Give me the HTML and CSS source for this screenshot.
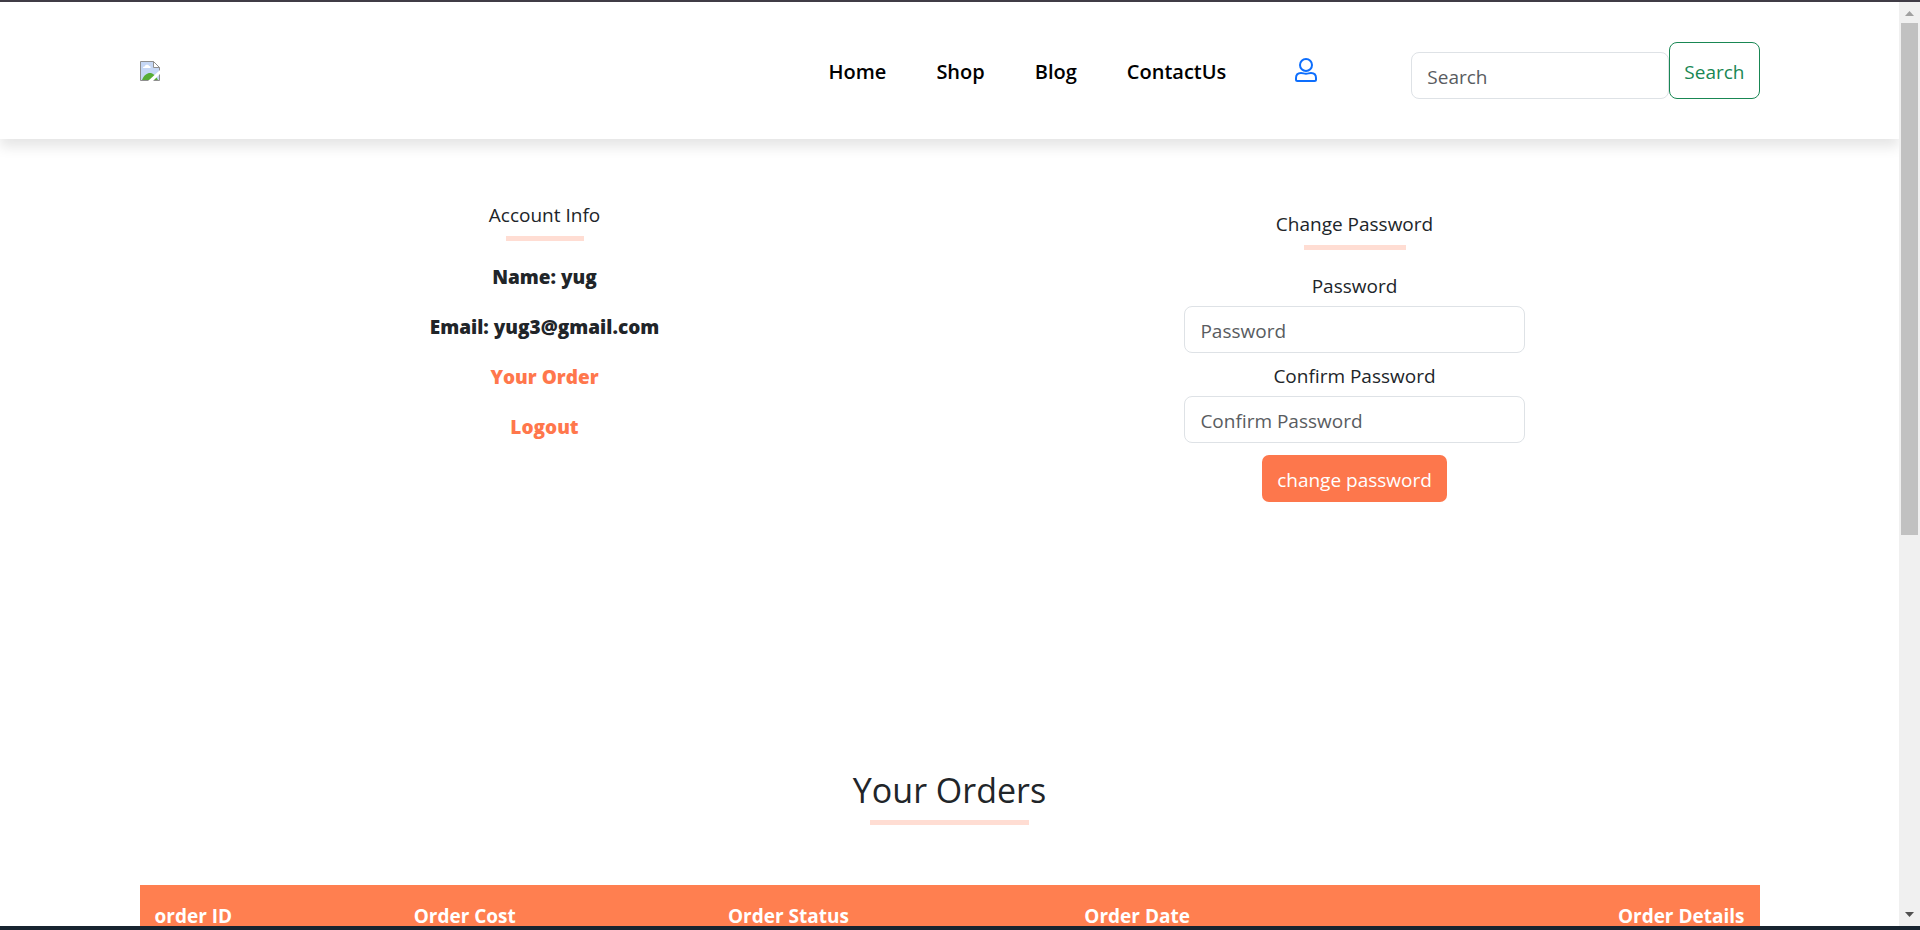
FILE: index.html
```html
<!DOCTYPE html>
<html lang="en">
  <head>
    <meta charset="UTF-8" />
    <meta name="viewport" content="width=device-width, initial-scale=1.0" />
    <title>Account</title>
    <link rel="stylesheet" href="styles.css">
  </head>
  <body>
    <div class="page">
      <nav class="navbar">
        <div class="container nav-inner">
          <a class="logo" href="#" aria-label="Logo">
            <svg width="20" height="20" viewBox="0 0 20 20">
              <path d="M.5.5h13l6 6v13H.5z" fill="#c5d7f5" stroke="#8f8f8f"/>
              <path d="M13.5.5v6h6z" fill="#fff" stroke="#8f8f8f"/>
              <path d="M3 7c0-2 2-1 2-2 1-2 4-1 4 0 2 0 2 2 1 2z" fill="#fff"/>
              <path d="M2 19c2-5 5-7 8-7s5 2 8 7z" fill="#56ad35"/>
              <path d="M8 20L20 9v4l-7 7z" fill="#fff"/>
            </svg>
          </a>
          <ul class="nav-links">
            <li><a href="#">Home</a></li>
            <li><a href="#">Shop</a></li>
            <li><a href="#">Blog</a></li>
            <li><a href="#">ContactUs</a></li>
          </ul>
          <a class="user" href="#" aria-label="Account">
            <svg width="22" height="24" viewBox="0 0 22 24" fill="none" stroke="#0d6efd" stroke-width="2">
              <circle cx="11" cy="7" r="6"/>
              <path d="M2.500 23h17q1.500 0 1.500-1.500v-1.500c0-3-2-5-5-5-2 0-3 .7-5 .7s-3-.7-5-.7c-3 0-5 2-5 5v1.500q0 1.500 1.500 1.500z"/>
            </svg>
          </a>
          <form class="search">
            <input class="form-control" type="search" placeholder="Search" aria-label="Search">
            <button class="search-btn" type="submit">Search</button>
          </form>
        </div>
      </nav>

      <section class="container account">
        <div class="account-info">
          <h3>Account Info</h3>
          <hr class="line-info">
          <p>Name: <span>yug</span></p>
          <p>Email: <span>yug3@gmail.com</span></p>
          <p><a href="#orders">Your Order</a></p>
          <p><a href="#">Logout</a></p>
        </div>
        <form class="password-form">
          <h3>Change Password</h3>
          <hr class="line-password">
          <label for="password">Password</label>
          <input class="form-control" type="password" id="password" placeholder="Password">
          <label for="confirm">Confirm Password</label>
          <input class="form-control" type="password" id="confirm" placeholder="Confirm Password">
          <button class="change-btn" type="submit">change password</button>
        </form>
      </section>

      <section class="container orders" id="orders">
        <h2>Your Orders</h2>
        <hr class="line-orders">
        <table>
          <thead>
            <tr>
              <th class="col-id">order ID</th>
              <th class="col-cost">Order Cost</th>
              <th class="col-status">Order Status</th>
              <th>Order Date</th>
              <th class="col-details">Order Details</th>
            </tr>
          </thead>
        </table>
      </section>
    </div>

    <div class="scrollbar">
      <svg width="21" height="21" viewBox="0 0 21 21"><path d="M6 14l4.500-5 4.500 5z" fill="#a0a0a0"/></svg>
      <div class="track"><div class="thumb"></div></div>
      <svg width="21" height="21" viewBox="0 0 21 21"><path d="M6 7l4.500 5L15 7z" fill="#505050"/></svg>
    </div>
  </body>
</html>
```
FILE: styles.css
```css
* {
  box-sizing: border-box;
}
body {
  margin: 0;
  height: 100vh;
  display: flex;
  overflow: hidden;
  border-top: 2px solid #403c46;
  border-bottom: 4px solid #182430;
  font-family: "Open Sans", "Noto Sans", sans-serif;
  font-size: 19px;
  line-height: 30px;
  color: #212529;
  background: #fff;
}
a {
  text-decoration: none;
}
input,
button {
  font: inherit;
}
.page {
  flex: 1;
  overflow: hidden;
}
.container {
  max-width: 1650px;
  margin: 0 auto;
  padding: 0 15px;
}

/* navbar */
.navbar {
  padding: 40px 0;
  box-shadow: 0 8px 12px rgba(0, 0, 0, 0.1);
}
.nav-inner {
  display: flex;
  align-items: center;
}
.logo {
  margin-right: auto;
}
.logo svg,
.user svg {
  display: block;
}
.nav-links {
  display: flex;
  gap: 50px;
  margin: 0;
  padding: 2px 0 0;
  list-style: none;
  font-size: 20px;
  font-weight: 600;
}
.nav-links a {
  color: #000;
}
.user {
  margin: 0 94px 2px 69px;
}
.search {
  display: flex;
  align-items: flex-end;
}
.form-control {
  height: 47px;
  padding: 9px 15px 7px;
  border: 1px solid #dee2e6;
  border-radius: 8px;
  background: #fff;
  color: #212529;
}
.form-control::placeholder {
  color: #595c5f;
}
.search .form-control {
  width: 258px;
}
.search-btn {
  height: 57px;
  padding: 2px 14px 0;
  border: 1px solid #198754;
  border-radius: 8px;
  background: #fff;
  color: #198754;
}

/* account */
.account {
  display: flex;
  padding-top: 61px;
  text-align: center;
}
.account > * {
  flex: 1;
}
h3 {
  margin: 0;
  font-size: 19px;
  font-weight: 500;
  line-height: 30px;
}
hr {
  height: 5px;
  margin: 6px auto 21px;
  border: 0;
  background: #ffddd3;
}
.line-info {
  width: 78px;
}
.line-password {
  width: 102px;
}
.account-info p {
  margin: 0 0 20px;
  font-weight: 800;
}
.account-info a {
  color: #ff774c;
}
.password-form {
  display: flex;
  flex-direction: column;
  align-items: center;
  padding-top: 9px;
  font-weight: 500;
}
.password-form hr {
  margin: 6px 0 21px;
}
.password-form .form-control {
  width: 42%;
  margin: 5px 0 8px;
}
.change-btn {
  height: 47px;
  margin-top: 4px;
  padding: 2px 15px 0;
  border: 0;
  border-radius: 7px;
  background: #fd774c;
  color: #fff;
}

/* orders */
.orders {
  padding-top: 264px;
}
h2 {
  margin: 0;
  font-size: 34px;
  font-weight: 500;
  line-height: 48px;
  text-align: center;
}
.line-orders {
  width: 159px;
  margin: 6px auto 60px;
}
table {
  width: 100%;
  border-collapse: collapse;
  table-layout: fixed;
}
th {
  padding: 16px 15px;
  background: #ff7f50;
  color: #fff;
  font-weight: 700;
  text-align: left;
}
.col-id {
  width: 16%;
}
.col-cost {
  width: 19.4%;
}
.col-status {
  width: 22%;
}
.col-details {
  text-align: right;
}

/* scrollbar */
.scrollbar {
  display: flex;
  flex-direction: column;
  width: 21px;
  background: #f0f0f0;
}
.track {
  flex: 1;
  padding: 0 2px;
}
.thumb {
  height: 58%;
  background: #c1c1c1;
}
```
